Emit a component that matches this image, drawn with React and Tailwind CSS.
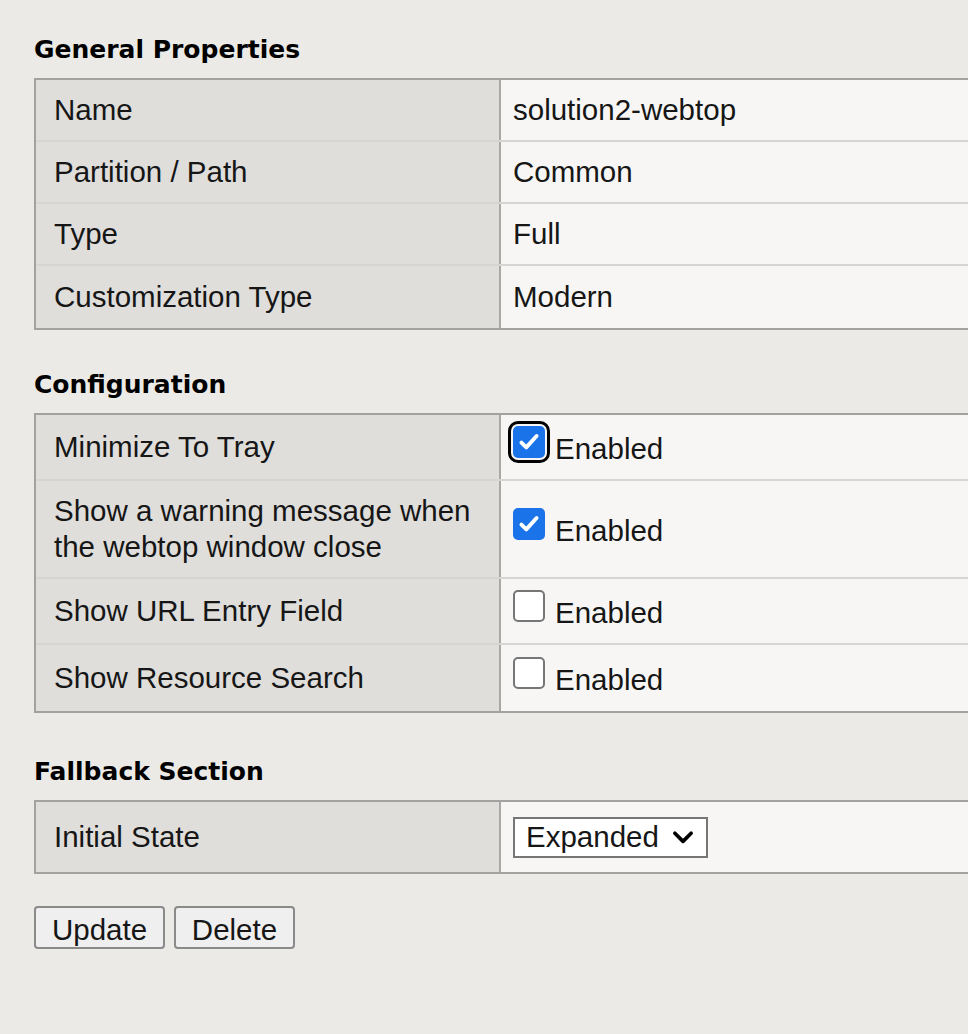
import React from 'react';

const body = { fontFamily: '"Liberation Sans", Arial, sans-serif' };
const head = { fontFamily: '"DejaVu Sans", Verdana, sans-serif' };

const Check = ({ checked, focus }) => (
    <span
        className={`-mt-[10px] mr-[10px] flex h-[32px] w-[32px] shrink-0 items-center justify-center rounded-[5px] ${
            checked ? 'bg-[#1a73e8]' : 'border-2 border-[#767676] bg-white'
        } ${focus ? 'outline-[3px] outline-offset-[2px] outline-black outline' : ''}`}
    >
        {checked && (
            <svg viewBox="0 0 24 24" className="h-[26px] w-[26px]" fill="none" stroke="white" strokeWidth="3.6" strokeLinecap="round" strokeLinejoin="round">
                <path d="M5 12.5l4.5 4.5L19 6.5" />
            </svg>
        )}
    </span>
);

const Row = ({ label, h, last, children }) => (
    <div className={`flex ${last ? '' : 'border-b-2 border-[#d6d5d2]'}`} style={{ height: h }}>
        <div className="flex w-[465px] shrink-0 items-center border-r-2 border-[#a9a8a6] bg-[#dfdedb] pl-[18px] pr-[16px] leading-[36px] text-[#161616]">
            {label}
        </div>
        <div className="flex flex-1 items-center bg-[#f7f6f5] pl-[12px] text-[#161616]">{children}</div>
    </div>
);

const Section = ({ title, children }) => (
    <div>
        <h2 className="mb-[13px] text-[25px] font-bold leading-[30px] text-black" style={head}>{title}</h2>
        <div className="w-[1100px] border-2 border-[#a3a2a0]">{children}</div>
    </div>
);

const Enabled = ({ checked, focus }) => (
    <div className="flex items-center">
        <Check checked={checked} focus={focus} />
        <span className="mt-[4px]">Enabled</span>
    </div>
);

export default function App() {
    return (
        <div className="h-[1034px] w-[968px] overflow-hidden bg-[#ebeae7] pl-[34px] pt-[35px] text-[29.5px]" style={body}>
            <Section title="General Properties">
                <Row label="Name" h={62}>solution2-webtop</Row>
                <Row label="Partition / Path" h={62}>Common</Row>
                <Row label="Type" h={62}>Full</Row>
                <Row label="Customization Type" h={62} last>Modern</Row>
            </Section>

            <div className="mt-[40px]">
                <Section title="Configuration">
                    <Row label="Minimize To Tray" h={66}><Enabled checked focus /></Row>
                    <Row label="Show a warning message when the webtop window close" h={98}><Enabled checked /></Row>
                    <Row label="Show URL Entry Field" h={66}><Enabled /></Row>
                    <Row label="Show Resource Search" h={66} last><Enabled /></Row>
                </Section>
            </div>

            <div className="mt-[44px]">
                <Section title="Fallback Section">
                    <Row label="Initial State" h={70} last>
                        <div className="flex h-[41px] w-[195px] items-center justify-between border-2 border-[#767676] bg-white pl-[11px] pr-[10px]">
                            <span>Expanded</span>
                            <svg viewBox="0 0 24 24" className="h-[26px] w-[26px]" fill="none" stroke="black" strokeWidth="3.4" strokeLinecap="round" strokeLinejoin="round">
                                <path d="M4.5 8.5l7.5 7.5 7.5-7.5" />
                            </svg>
                        </div>
                    </Row>
                </Section>
            </div>

            <div className="mt-[32px] flex gap-[9px]">
                <button className="h-[43px] w-[131px] rounded-[4px] border-2 border-[#8a8a8a] bg-[#efefef] text-[29.5px] text-[#161616]">Update</button>
                <button className="h-[43px] w-[121px] rounded-[4px] border-2 border-[#8a8a8a] bg-[#efefef] text-[29.5px] text-[#161616]">Delete</button>
            </div>
        </div>
    );
}
